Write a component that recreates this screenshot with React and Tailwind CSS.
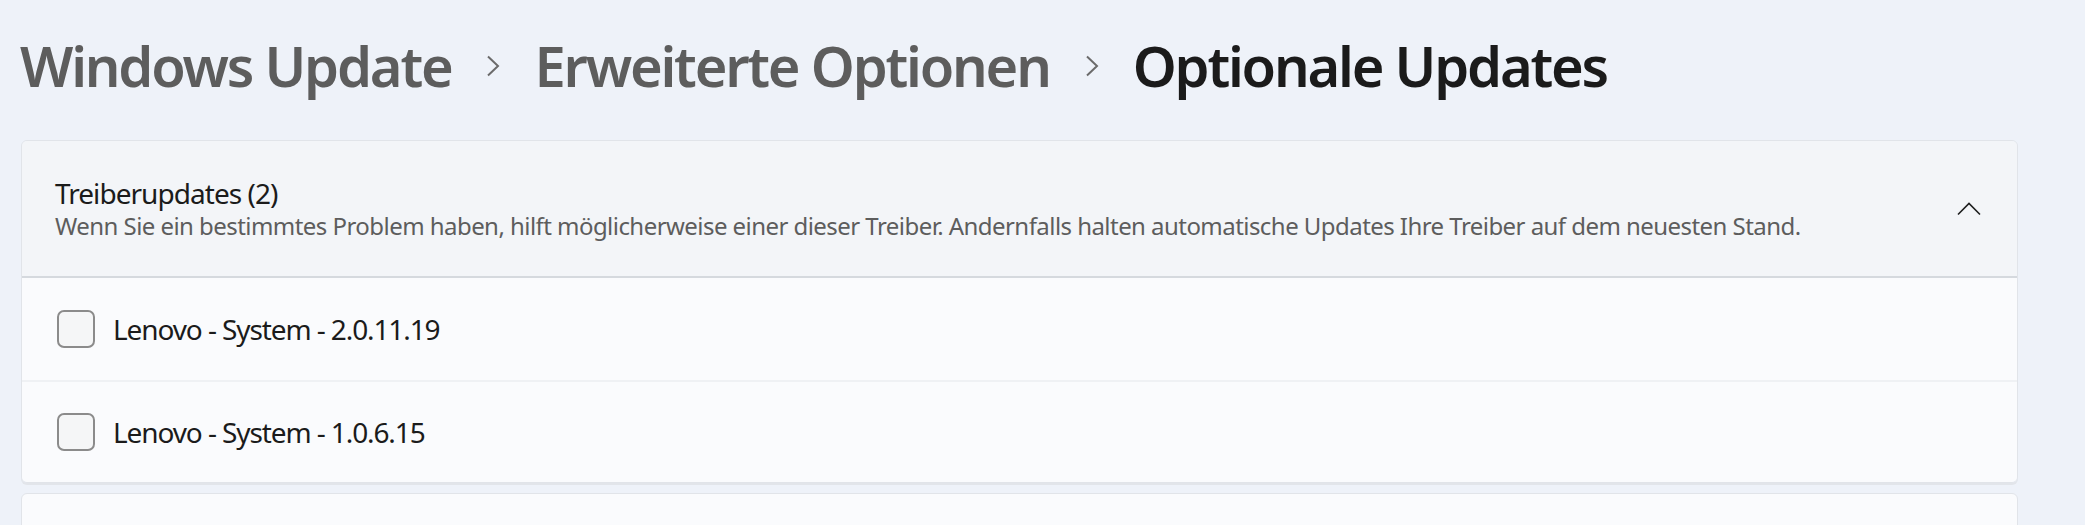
import React from 'react';

const Chevron = () => (
  <svg width="14" height="22" viewBox="0 0 14 22" className="ml-[35px] mr-[34px] mt-[2px] shrink-0" fill="none">
    <path d="M2 1.5 L12 11 L2 20.5" stroke="#6b6b6b" strokeWidth="2" />
  </svg>
);

const drivers = [
  { id: 1, name: 'Lenovo - System - 2.0.11.19' },
  { id: 2, name: 'Lenovo - System - 1.0.6.15' },
];

const App = () => {
  return (
    <div
      className="w-full h-[525px] overflow-hidden bg-[#eef2f9]"
      style={{ fontFamily: '"Noto Sans", "Open Sans", sans-serif' }}
    >
      <h1 className="flex items-center pl-[20px] pt-[26px] h-[104px] text-[56px] leading-[64px] font-semibold tracking-[-2.2px] whitespace-nowrap">
        <span className="text-[#5d5d5d]">Windows Update</span>
        <Chevron />
        <span className="text-[#5d5d5d]">Erweiterte Optionen</span>
        <Chevron />
        <span className="text-[#1b1b1b]">Optionale Updates</span>
      </h1>

      <div className="ml-[21px] mr-[67px] mt-[36px] rounded-[6px] border border-[#e1e4e9] shadow-[0_2px_0_#e2e5ea] overflow-hidden">
        <div className="flex items-center justify-between h-[137px] pl-[33px] pr-[36px] bg-[#f3f5f8] border-b-2 border-[#d5d9de]">
          <div>
            <div className="text-[28px] leading-[34px] tracking-[-0.95px] text-[#1b1b1b]">Treiberupdates (2)</div>
            <div className="text-[24px] leading-[32px] tracking-[-0.55px] text-[#5d5d5d]">
              Wenn Sie ein bestimmtes Problem haben, hilft möglicherweise einer dieser Treiber. Andernfalls halten automatische Updates Ihre Treiber auf dem neuesten Stand.
            </div>
          </div>
          <svg width="24" height="14" viewBox="0 0 24 14" fill="none">
            <path d="M1 12.5 L12 1.5 L23 12.5" stroke="#1f1f1f" strokeWidth="1.6" />
          </svg>
        </div>
        <div className="bg-[#fafbfd]">
          {drivers.map((d, i) => (
            <div
              key={d.id}
              className={`flex items-center h-[102px] pl-[35px] ${i > 0 ? 'border-t-2 border-[#eff1f4]' : ''}`}
            >
              <div className="w-[38px] h-[38px] rounded-[7px] border-2 border-[#8b8b8b] bg-[#f5f6f7]" />
              <span className="ml-[18px] text-[28px] tracking-[-1.1px] text-[#1b1b1b]">{d.name}</span>
            </div>
          ))}
        </div>
      </div>

      <div className="ml-[21px] mr-[67px] mt-[10px] h-[60px] rounded-t-[6px] border border-[#e1e4e9] bg-[#fafbfd]" />
    </div>
  );
};

export default App;
